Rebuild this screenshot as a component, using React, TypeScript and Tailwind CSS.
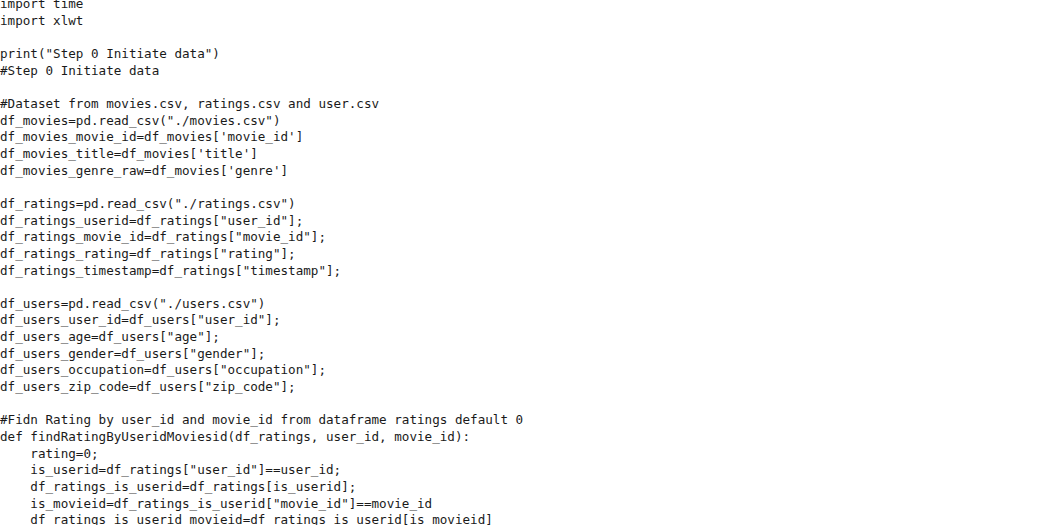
const code = `import time
import xlwt

print("Step 0 Initiate data")
#Step 0 Initiate data

#Dataset from movies.csv, ratings.csv and user.csv
df_movies=pd.read_csv("./movies.csv")
df_movies_movie_id=df_movies['movie_id']
df_movies_title=df_movies['title']
df_movies_genre_raw=df_movies['genre']

df_ratings=pd.read_csv("./ratings.csv")
df_ratings_userid=df_ratings["user_id"];
df_ratings_movie_id=df_ratings["movie_id"];
df_ratings_rating=df_ratings["rating"];
df_ratings_timestamp=df_ratings["timestamp"];

df_users=pd.read_csv("./users.csv")
df_users_user_id=df_users["user_id"];
df_users_age=df_users["age"];
df_users_gender=df_users["gender"];
df_users_occupation=df_users["occupation"];
df_users_zip_code=df_users["zip_code"];

#Fidn Rating by user_id and movie_id from dataframe ratings default 0
def findRatingByUseridMoviesid(df_ratings, user_id, movie_id):
    rating=0;
    is_userid=df_ratings["user_id"]==user_id;
    df_ratings_is_userid=df_ratings[is_userid];
    is_movieid=df_ratings_is_userid["movie_id"]==movie_id
    df_ratings_is_userid_movieid=df_ratings_is_userid[is_movieid]`;

export default function App() {
  return (
    <div className="h-[525px] w-[1050px] overflow-hidden bg-white">
      <pre className="-mt-[4px] font-['DejaVu_Sans_Mono',monospace] text-[12.6px] leading-[16.65px] text-[#1a1a1a]">
        {code}
      </pre>
    </div>
  );
}
